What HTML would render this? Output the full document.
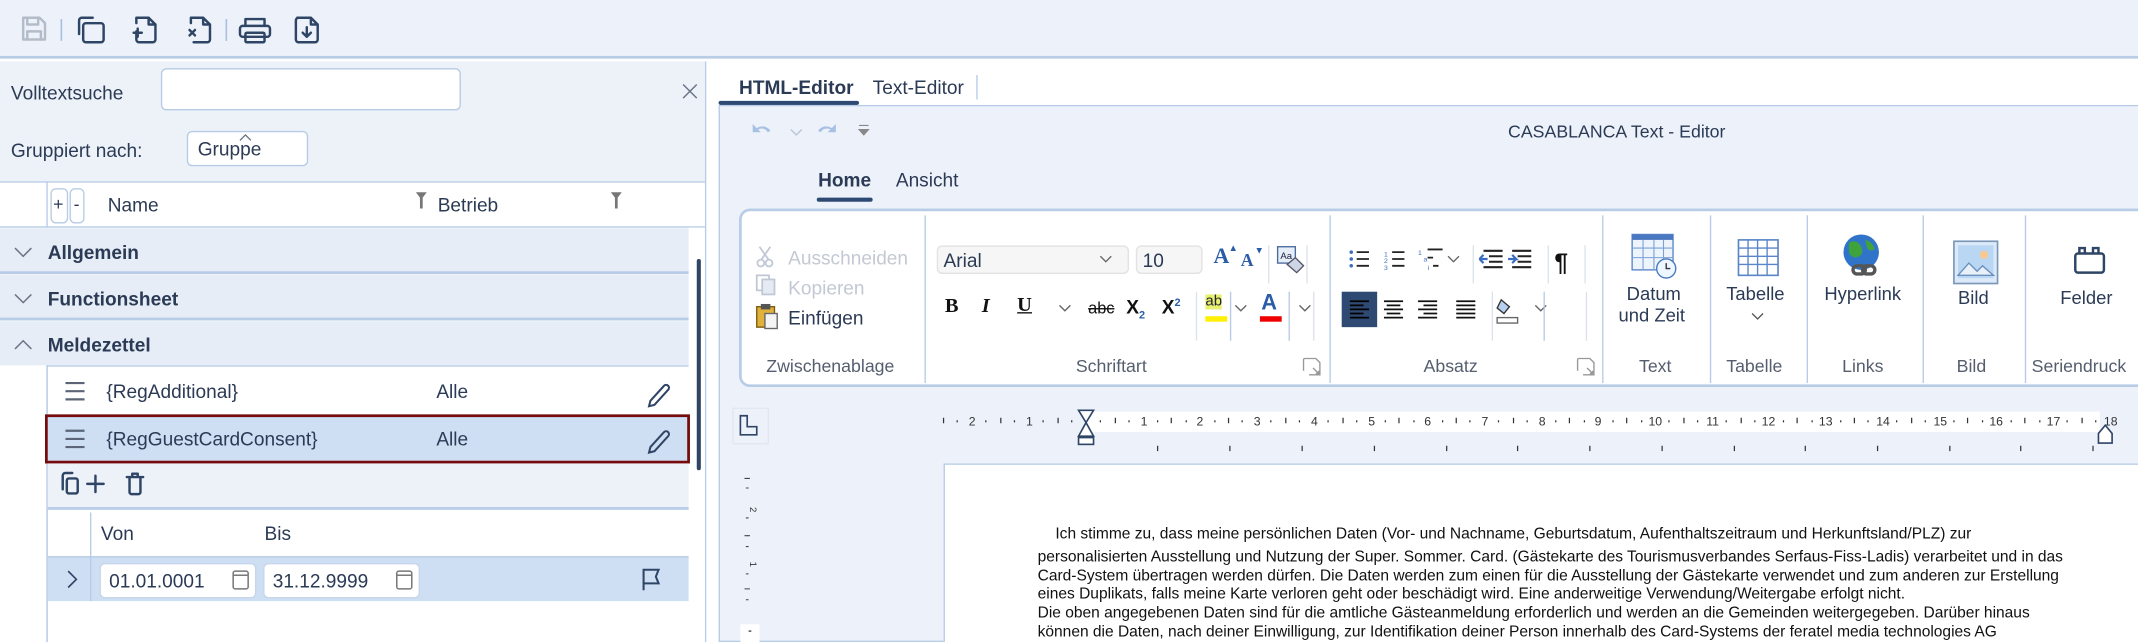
<!DOCTYPE html>
<html><head><meta charset="utf-8">
<style>
*{box-sizing:border-box;margin:0;padding:0}
html,body{width:2138px;height:642px;overflow:hidden;background:#fff}
#s{position:absolute;left:0;top:0;width:1568px;height:471px;transform:scale(1.36352,1.3631);transform-origin:0 0;font-family:"Liberation Sans",sans-serif;color:#2b3a55;font-size:14px;overflow:hidden;background:#fff}
.a{position:absolute}
.t{position:absolute;white-space:nowrap;line-height:1}
svg{position:absolute;overflow:visible}
.ic{fill:none;stroke:#2e4566;stroke-width:1.8;stroke-linecap:round;stroke-linejoin:round}
.b{font-weight:bold}
.lbl{color:#555e6e;font-size:13px}
.doc{position:absolute;left:761px;font-size:11.4px;color:#111;white-space:nowrap;line-height:1}
.sep{position:absolute;width:1px;background:#b8cbe6}
.gs{position:absolute;width:1px;background:#dde3ec}
.rn{font-size:9px;fill:#333;text-anchor:middle;font-family:"Liberation Sans",sans-serif}
</style></head><body><div id="s">
<div class="a" style="left:0;top:0;width:1568px;height:43px;background:#edf2fa;border-bottom:2px solid #b8cce6"></div>
<svg style="left:0;top:0" width="260" height="43">
<g class="ic" style="stroke:#b3bcc8"><path d="M17 13h12l4 4v12H17z"/><path d="M20 13v5h8v-5M20 29v-6h10v6"/></g>
<line x1="45" y1="14" x2="45" y2="30" stroke="#a9c0e0" stroke-width="1.2"/>
<g class="ic"><path d="M58 25V15a2 2 0 0 1 2-2h8"/><rect x="61" y="17" width="15" height="14" rx="2"/>
<path d="M100 13h9l5 5v11a2 2 0 0 1-2 2h-10a2 2 0 0 1-2-2v-6M100 17v-4M98 24h6M101 21v6"/><path d="M109 13v5h5"/>
<path d="M140 13h9l5 5v11a2 2 0 0 1-2 2h-10M140 17v-4M149 13v5h5"/><path d="M139 22l4 4M143 22l-4 4"/></g>
<line x1="166" y1="14" x2="166" y2="30" stroke="#a9c0e0" stroke-width="1.2"/>
<g class="ic"><path d="M180 19v-5h14v5"/><rect x="176" y="19" width="22" height="8" rx="2"/><rect x="180" y="24" width="14" height="7" rx="1"/>
<path d="M218 13h10l5 5v11a2 2 0 0 1-2 2h-12a2 2 0 0 1-2-2V15a2 2 0 0 1 2-2zM228 13v5h5M225 20v7M222 24l3 3 3-3"/></g>
</svg>
<div class="a" style="left:0;top:45px;width:517px;height:426px;background:#edf2f9"></div>
<div class="t" style="left:8px;top:61px">Volltextsuche</div>
<div class="a" style="left:118px;top:50px;width:220px;height:31px;background:#fff;border:1px solid #b7cbe6;border-radius:4px"></div>
<svg style="left:500px;top:61px" width="12" height="12"><path d="M1 1l10 10M11 1L1 11" stroke="#6b7585" stroke-width="1.1"/></svg>
<div class="t" style="left:8px;top:103px">Gruppiert nach:</div>
<div class="a" style="left:137px;top:96px;width:89px;height:26px;background:#fff;border:1px solid #b7cbe6;border-radius:4px"></div>
<div class="t" style="left:145px;top:102px">Gruppe</div>
<svg style="left:175px;top:98px" width="10" height="6"><path d="M1 5l4-4 4 4" fill="none" stroke="#6b7585" stroke-width="1"/></svg>
<div class="a" style="left:0;top:133px;width:517px;height:34px;background:#fff;border-top:1px solid #b8cce6;border-bottom:1px solid #b8cce6"></div>
<div class="a" style="left:34px;top:133px;width:1px;height:34px;background:#b8cce6"></div>
<div class="a" style="left:37px;top:138px;width:13px;height:26px;border:1px solid #b8cce6;border-radius:4px"></div>
<div class="t" style="left:39px;top:143px;font-size:13px">+</div>
<div class="a" style="left:51px;top:138px;width:11px;height:26px;border:1px solid #b8cce6;border-radius:4px"></div>
<div class="t" style="left:54px;top:143px;font-size:13px">-</div>
<div class="t" style="left:79px;top:143px">Name</div>
<svg style="left:304px;top:140px" width="10" height="14"><path d="M1 1h8l-3 4v8h-2V5z" fill="#777"/></svg>
<div class="t" style="left:321px;top:143px">Betrieb</div>
<svg style="left:447px;top:140px" width="10" height="14"><path d="M1 1h8l-3 4v8h-2V5z" fill="#777"/></svg>
<div class="a" style="left:505px;top:167px;width:12px;height:304px;background:#fff"></div>
<div class="a" style="left:0;top:168px;width:505px;height:33px;background:#e6edf6;border-bottom:2px solid #b8cce6"></div>
<div class="a" style="left:0;top:202px;width:505px;height:33px;background:#e6edf6;border-bottom:2px solid #b8cce6"></div>
<div class="a" style="left:0;top:236px;width:505px;height:32px;background:#e6edf6"></div>
<svg style="left:10px;top:180px" width="14" height="10"><path d="M1 2l6 6 6-6" fill="none" stroke="#6b7585" stroke-width="1.1"/></svg>
<svg style="left:10px;top:214px" width="14" height="10"><path d="M1 2l6 6 6-6" fill="none" stroke="#6b7585" stroke-width="1.1"/></svg>
<svg style="left:10px;top:248px" width="14" height="10"><path d="M1 8l6-6 6 6" fill="none" stroke="#6b7585" stroke-width="1.1"/></svg>
<div class="t b" style="left:35px;top:178px">Allgemein</div>
<div class="t b" style="left:35px;top:212px">Functionsheet</div>
<div class="t b" style="left:35px;top:246px">Meldezettel</div>
<div class="a" style="left:34px;top:268px;width:471px;height:203px;background:#fff;border-left:1px solid #b8cce6;border-top:1px solid #b8cce6"></div>
<div class="a" style="left:0;top:268px;width:34px;height:203px;background:#fff"></div>
<div class="a" style="left:34px;top:268px;width:1px;height:203px;background:#b8cce6"></div>
<div class="a" style="left:33px;top:304px;width:473px;height:36px;background:#cfdff3;border:2.5px solid #750b0b"></div>
<svg style="left:46px;top:278px" width="450" height="60"><g stroke="#5b6577" stroke-width="1.6"><path d="M2 3h14M2 9h14M2 15h14M2 38h14M2 44h14M2 50h14"/></g>
<g fill="none" stroke="#2e4566" stroke-width="1.5"><path d="M431 16l10-11a2 2 0 0 1 3 3L434 19l-4 1z"/><path d="M431 50l10-11a2 2 0 0 1 3 3L434 53l-4 1z"/></g></svg>
<div class="t" style="left:78px;top:280px">{RegAdditional}</div>
<div class="t" style="left:320px;top:280px">Alle</div>
<div class="t" style="left:78px;top:315px">{RegGuestCardConsent}</div>
<div class="t" style="left:320px;top:315px">Alle</div>
<div class="a" style="left:35px;top:340px;width:470px;height:34px;background:#edf2f9;border-bottom:2px solid #b8cce6"></div>
<svg style="left:44px;top:345px" width="70" height="20"><g class="ic" stroke-width="1.5"><path d="M2 14V4a2 2 0 0 1 2-2h5"/><rect x="5" y="6" width="8" height="11" rx="1.5"/><path d="M26 4v12M20 10h12M51 5v11a1.5 1.5 0 0 0 1.5 1.5h5A1.5 1.5 0 0 0 59 16V5M49 5h12M53 5V2.5h4V5"/></g></svg>
<div class="a" style="left:66px;top:376px;width:1px;height:64px;background:#b8cce6"></div>
<div class="t" style="left:74px;top:384px">Von</div>
<div class="t" style="left:194px;top:384px">Bis</div>
<div class="a" style="left:35px;top:408px;width:470px;height:33px;background:#cfdff3;border-top:1px solid #b8cce6"></div>
<div class="a" style="left:66px;top:408px;width:1px;height:33px;background:#b8cce6"></div>
<svg style="left:48px;top:418px" width="10" height="14"><path d="M2 1l6 6-6 6" fill="none" stroke="#2e4566" stroke-width="1.2"/></svg>
<div class="a" style="left:73px;top:413px;width:115px;height:26px;background:#fff;border:1px solid #c7d6ea;border-radius:4px"></div>
<div class="a" style="left:193px;top:413px;width:115px;height:26px;background:#fff;border:1px solid #c7d6ea;border-radius:4px"></div>
<div class="t" style="left:80px;top:419px">01.01.0001</div>
<div class="t" style="left:200px;top:419px">31.12.9999</div>
<svg style="left:170px;top:418px" width="140" height="16"><g fill="none" stroke="#777" stroke-width="1.1"><rect x="1" y="1" width="11" height="13" rx="1.5"/><path d="M1 4h11"/><rect x="121" y="1" width="11" height="13" rx="1.5"/><path d="M121 4h11"/></g></svg>
<svg style="left:470px;top:416px" width="16" height="18"><path d="M2 17V2h11l-2 5 2 5H2" fill="none" stroke="#2e4566" stroke-width="1.5"/></svg>
<div class="a" style="left:511px;top:190px;width:3px;height:155px;background:#2e4566;border-radius:2px"></div>
<div class="a" style="left:517px;top:45px;width:4px;height:426px;background:#fff;border-left:1px solid #b8cce6"></div>
<div class="t b" style="left:542px;top:57px;color:#2b3a55">HTML-Editor</div>
<div class="a" style="left:527px;top:74px;width:103px;height:3px;background:#2e4a73;border-radius:2px"></div>
<div class="t" style="left:640px;top:57px">Text-Editor</div>
<div class="a" style="left:716px;top:55px;width:1px;height:18px;background:#b8cce6"></div>
<div class="a" style="left:527px;top:77px;width:1045px;height:394px;background:#edf2fa;border:1px solid #b8cce6"></div>
<svg style="left:549px;top:88px" width="100" height="18"><g fill="#a8c0e2"><path d="M3 3v6h6l-2-2a5 5 0 0 1 7 2l2-1a7 7 0 0 0-10-2z"/><path d="M38 3v6h-6l2-2a5 5 0 0 0-7 2l-2-1a7 7 0 0 1 10-2z" transform="translate(26,0)"/></g>
<path d="M31 7l4 4 4-4" fill="none" stroke="#b8c4d4" stroke-width="1"/><path d="M81 4h7M81 7h7l-3.5 4z" fill="#888" stroke="#888" stroke-width="0.8"/></svg>
<div class="t" style="left:1106px;top:90px;font-size:13px">CASABLANCA Text - Editor</div>
<div class="t b" style="left:600px;top:125px">Home</div>
<div class="a" style="left:599px;top:145px;width:41px;height:3px;background:#2e4a73;border-radius:2px"></div>
<div class="t" style="left:657px;top:125px">Ansicht</div>
<div class="a" style="left:542px;top:153px;width:1040px;height:131px;background:#fff;border:2px solid #b8cce6;border-right:none;border-radius:8px 0 0 8px"></div>
<div class="sep" style="left:678px;top:158px;height:123px"></div>
<div class="sep" style="left:975px;top:158px;height:123px"></div>
<div class="sep" style="left:1175px;top:158px;height:123px"></div>
<div class="sep" style="left:1254px;top:158px;height:123px"></div>
<div class="sep" style="left:1325px;top:158px;height:123px"></div>
<div class="sep" style="left:1410px;top:158px;height:123px"></div>
<div class="sep" style="left:1485px;top:158px;height:123px"></div>
<div class="t lbl" style="left:562px;top:262px">Zwischenablage</div>
<div class="t lbl" style="left:789px;top:262px">Schriftart</div>
<div class="t lbl" style="left:1044px;top:262px">Absatz</div>
<div class="t lbl" style="left:1202px;top:262px">Text</div>
<div class="t lbl" style="left:1266px;top:262px">Tabelle</div>
<div class="t lbl" style="left:1351px;top:262px">Links</div>
<div class="t lbl" style="left:1435px;top:262px">Bild</div>
<div class="t lbl" style="left:1490px;top:262px">Seriendruck</div>
<svg style="left:955px;top:262px" width="220" height="16"><g fill="none" stroke="#999" stroke-width="1"><path d="M1 10V2a1 1 0 0 1 1-1h8l3 3v9H5M8 8l4 4M10 12h2v-2"/><path d="M202 10V2a1 1 0 0 1 1-1h8l3 3v9h-8M209 8l4 4M211 12h2v-2"/></g></svg>
<svg style="left:553px;top:180px" width="22" height="62"><g fill="none" stroke="#c0c8d6" stroke-width="1.3"><path d="M4 1l7 10M12 1L5 11"/><circle cx="5" cy="13" r="2.5"/><circle cx="11" cy="13" r="2.5"/><rect x="2" y="22" width="9" height="11"/><rect x="6" y="25" width="9" height="11" fill="#e6ebf3"/></g>
<rect x="2" y="45" width="13" height="15" fill="#e0b23b" stroke="#7a5a10" stroke-width="1"/><rect x="5" y="43" width="7" height="4" fill="#555"/><rect x="8" y="50" width="9" height="11" fill="#f4f4f4" stroke="#666" stroke-width="1"/></svg>
<div class="t" style="left:578px;top:182px;color:#c3c9d3">Ausschneiden</div>
<div class="t" style="left:578px;top:204px;color:#c3c9d3">Kopieren</div>
<div class="t" style="left:578px;top:226px">Einfügen</div>
<div class="a" style="left:687px;top:180px;width:141px;height:21px;background:#f6f6f6;border:1px solid #e2e2e2;border-radius:4px"></div>
<div class="t" style="left:692px;top:184px">Arial</div>
<svg style="left:806px;top:186px" width="60" height="10"><path d="M1 2l4 4 4-4M52 2l4 4 4-4" fill="none" stroke="#666" stroke-width="1"/></svg>
<div class="a" style="left:833px;top:180px;width:49px;height:21px;background:#f6f6f6;border:1px solid #e2e2e2;border-radius:4px"></div>
<div class="t" style="left:838px;top:184px">10</div>
<div class="t b" style="left:890px;top:181px;font-family:'Liberation Serif',serif;font-size:16px;color:#2a5ca8">A</div>
<div class="t b" style="left:910px;top:184px;font-family:'Liberation Serif',serif;font-size:13px;color:#2a5ca8">A</div>
<div class="t" style="left:901px;top:179px;font-size:7px;color:#2a5ca8">▲</div>
<div class="t" style="left:920px;top:181px;font-size:7px;color:#2a5ca8">▼</div>
<div class="gs" style="left:930px;top:180px;height:28px"></div>
<svg style="left:936px;top:180px" width="22" height="22"><rect x="1" y="1" width="13" height="12" fill="#e6eef8" stroke="#4b6aa0"/><text x="3" y="10" font-size="7" fill="#224">Aa</text><path d="M8 14l6-5 6 6-5 5z" fill="#cdd6e6" stroke="#556" stroke-width="1"/></svg>
<div class="gs" style="left:958px;top:180px;height:28px"></div>
<div class="t b" style="left:693px;top:218px;font-family:'Liberation Serif',serif;font-size:15px;color:#111">B</div>
<div class="t b" style="left:720px;top:218px;font-family:'Liberation Serif',serif;font-size:15px;font-style:italic;color:#111">I</div>
<div class="t b" style="left:746px;top:217px;font-family:'Liberation Serif',serif;font-size:15px;text-decoration:underline;color:#111">U</div>
<svg style="left:776px;top:222px" width="10" height="8"><path d="M1 2l4 4 4-4" fill="none" stroke="#666" stroke-width="1"/></svg>
<div class="t" style="left:798px;top:220px;font-size:12px;text-decoration:line-through;color:#111">abc</div>
<div class="t b" style="left:826px;top:218px;font-size:14px;color:#111">X<sub style="font-size:8px;color:#2a5ca8">2</sub></div>
<div class="t b" style="left:852px;top:218px;font-size:14px;color:#111">X<sup style="font-size:8px;color:#2a5ca8">2</sup></div>
<div class="gs" style="left:877px;top:214px;height:36px"></div>
<div class="a" style="left:884px;top:232px;width:16px;height:4px;background:#ffef00"></div>
<div class="t" style="left:884px;top:216px;font-size:11px;color:#223;background:#e8f070">ab</div>
<div class="sep" style="left:902px;top:214px;height:36px"></div>
<svg style="left:905px;top:222px" width="60" height="8"><path d="M1 2l4 4 4-4M48 2l4 4 4-4" fill="none" stroke="#666" stroke-width="1"/></svg>
<div class="t b" style="left:925px;top:215px;font-size:16px;color:#2a5ca8">A</div>
<div class="a" style="left:924px;top:232px;width:16px;height:4px;background:#e00"></div>
<div class="sep" style="left:945px;top:214px;height:36px"></div>
<div class="gs" style="left:963px;top:214px;height:36px"></div>
<svg style="left:985px;top:180px" width="175" height="65">
<g fill="#3a6cc0"><circle cx="6" cy="5" r="1.3"/><circle cx="6" cy="10" r="1.3"/><circle cx="6" cy="15" r="1.3"/></g>
<g stroke="#222" stroke-width="1.3"><path d="M10 5h9M10 10h9M10 15h9M36 5h9M36 10h9M36 15h9M62 3h11M62 9h4M66 15h4"/></g>
<text x="30" y="8" font-size="5" fill="#3a6cc0">1</text><text x="30" y="13" font-size="5" fill="#3a6cc0">2</text><text x="30" y="18" font-size="5" fill="#3a6cc0">3</text>
<text x="55" y="7" font-size="5" fill="#3a6cc0">1</text><text x="59" y="12" font-size="5" fill="#3a6cc0">a</text><text x="62" y="18" font-size="5" fill="#3a6cc0">i</text>
<path d="M77 8l4 4 4-4" fill="none" stroke="#666" stroke-width="1"/>
<g stroke="#222" stroke-width="1.5"><path d="M103 4h14M107 8h10M107 12h10M103 16h14M124 4h14M128 8h10M128 12h10M124 16h14"/></g>
<path d="M100 10h6M100 10l3-3M100 10l3 3M121 10h6l-3-3M127 10l-3 3" stroke="#3a6cc0" stroke-width="1.6" fill="none"/>
<text x="155" y="19" font-size="18" font-weight="bold" fill="#111" font-family="Liberation Sans">¶</text>
</svg>
<div class="gs" style="left:1080px;top:180px;height:28px"></div>
<div class="gs" style="left:1135px;top:180px;height:28px"></div>
<div class="gs" style="left:1162px;top:180px;height:28px"></div>
<div class="a" style="left:984px;top:214px;width:26px;height:26px;background:#2e4a73"></div>
<svg style="left:984px;top:214px" width="150" height="26"><g stroke="#111" stroke-width="1.3"><path d="M6 7h14M6 10h10M6 13h14M6 16h10M6 19h14" stroke="#000"/><path d="M31 7h14M33 10h10M31 13h14M33 16h10M31 19h14M56 7h14M60 10h10M56 13h14M60 16h10M56 19h14M84 7h14M84 10h14M84 13h14M84 16h14M84 19h14"/></g>
<path d="M117 6l6 5-4 5-5-4z" fill="#b8d0f0" stroke="#333" stroke-width="1"/><rect x="114" y="19" width="15" height="4" fill="#fff" stroke="#666"/>
<path d="M142 10l4 4 4-4" fill="none" stroke="#666" stroke-width="1"/></svg>
<div class="gs" style="left:1094px;top:214px;height:36px"></div>
<div class="sep" style="left:1132px;top:214px;height:36px"></div>
<div class="gs" style="left:1163px;top:214px;height:36px"></div>
<svg style="left:1196px;top:170px" width="40" height="36"><rect x="1" y="2" width="30" height="26" fill="#eef4fc" stroke="#5a85c8"/><rect x="1" y="2" width="30" height="4" fill="#4a78c0"/><g stroke="#7aa0d8" stroke-width="0.8"><path d="M1 12h30M1 19h30M9 6v22M17 6v22M24 6v22"/></g><circle cx="26" cy="27" r="7" fill="#eef6ff" stroke="#4a78c0"/><path d="M26 23v4h3" stroke="#333" fill="none"/></svg>
<div class="t" style="left:1193px;top:209px;font-size:13.5px">Datum</div>
<div class="t" style="left:1187px;top:225px;font-size:13.5px">und Zeit</div>
<svg style="left:1274px;top:175px" width="32" height="28"><rect x="1" y="1" width="29" height="26" fill="#fff" stroke="#5a85c8" stroke-width="1.2"/><g stroke="#5a85c8" stroke-width="1"><path d="M1 7h29M1 13h29M1 19h29M8 1v26M15 1v26M22 1v26"/></g></svg>
<div class="t" style="left:1266px;top:209px;font-size:13.5px">Tabelle</div>
<svg style="left:1284px;top:228px" width="10" height="8"><path d="M1 2l4 4 4-4" fill="none" stroke="#555" stroke-width="1"/></svg>
<svg style="left:1349px;top:170px" width="36" height="34"><circle cx="16" cy="15" r="13" fill="#2f74c9"/><path d="M7 8q6-3 9 3t-4 8q-5-1-5-5zM19 6q5 1 7 7-5 2-6-2z" fill="#3ea33a"/><g fill="none" stroke="#555" stroke-width="2.5"><rect x="10" y="25" width="9" height="6" rx="3"/><rect x="17" y="25" width="9" height="6" rx="3"/></g></svg>
<div class="t" style="left:1338px;top:209px;font-size:13.5px">Hyperlink</div>
<svg style="left:1432px;top:176px" width="36" height="34"><rect x="1" y="1" width="32" height="31" fill="#dbe9f8" stroke="#7a96b8" stroke-width="1.2"/><rect x="4" y="4" width="26" height="24" fill="#b9d6f3"/><circle cx="23" cy="11" r="3" fill="#f8c890"/><path d="M4 26l8-9 6 6 4-4 8 7z" fill="#e8f0fa" stroke="#6b8fbf"/></svg>
<div class="t" style="left:1436px;top:212px;font-size:13.5px">Bild</div>
<svg style="left:1520px;top:180px" width="28" height="24"><g fill="none" stroke="#2e4566" stroke-width="1.8"><rect x="2" y="6" width="21" height="14" rx="2"/><path d="M5 6V2h4v4M15 6V2h4v4"/></g></svg>
<div class="t" style="left:1511px;top:212px;font-size:13.5px">Felder</div>
<div class="a" style="left:537px;top:299px;width:27px;height:27px;border:1px solid #e0e7f2"></div>
<svg style="left:541px;top:304px" width="20" height="18"><path d="M2 1v14h12v-6H7V1z" fill="none" stroke="#2e4566" stroke-width="1.2"/></svg>
<div class="a" style="left:797px;top:302px;width:743px;height:15px;background:#fff"></div>
<svg style="left:0;top:0" width="1568" height="471">
<g class="rn">
<text x="713" y="312">2</text><text x="755" y="312">1</text>
<text x="839" y="312">1</text><text x="880" y="312">2</text><text x="922" y="312">3</text><text x="964" y="312">4</text><text x="1006" y="312">5</text><text x="1047" y="312">6</text><text x="1089" y="312">7</text><text x="1131" y="312">8</text><text x="1172" y="312">9</text><text x="1214" y="312">10</text><text x="1256" y="312">11</text><text x="1297" y="312">12</text><text x="1339" y="312">13</text><text x="1381" y="312">14</text><text x="1423" y="312">15</text><text x="1464" y="312">16</text><text x="1506" y="312">17</text><text x="1548" y="312">18</text>
</g>
<g stroke="#333" stroke-width="0.9">
<path d="M692 306.5v4M734 306.5v4M776 306.5v4M818 306.5v4M859 306.5v4M901 306.5v4M943 306.5v4M985 306.5v4M1026 306.5v4M1068 306.5v4M1110 306.5v4M1151 306.5v4M1193 306.5v4M1235 306.5v4M1277 306.5v4M1318 306.5v4M1360 306.5v4M1402 306.5v4M1443 306.5v4M1485 306.5v4M1527 306.5v4"/>
<path d="M702 308.3v1.6M723 308.3v1.6M744 308.3v1.6M765 308.3v1.6M786 308.3v1.6M807 308.3v1.6M828 308.3v1.6M849 308.3v1.6M870 308.3v1.6M891 308.3v1.6M911 308.3v1.6M932 308.3v1.6M953 308.3v1.6M974 308.3v1.6M995 308.3v1.6M1016 308.3v1.6M1037 308.3v1.6M1058 308.3v1.6M1078 308.3v1.6M1099 308.3v1.6M1120 308.3v1.6M1141 308.3v1.6M1162 308.3v1.6M1183 308.3v1.6M1204 308.3v1.6M1224 308.3v1.6M1245 308.3v1.6M1266 308.3v1.6M1287 308.3v1.6M1308 308.3v1.6M1329 308.3v1.6M1350 308.3v1.6M1370 308.3v1.6M1391 308.3v1.6M1412 308.3v1.6M1433 308.3v1.6M1454 308.3v1.6M1475 308.3v1.6M1496 308.3v1.6M1516 308.3v1.6M1537 308.3v1.6"/>
<path d="M849 327v4M902 327v4M955 327v4M1008 327v4M1061 327v4M1113 327v4M1166 327v4M1219 327v4M1272 327v4M1324 327v4M1377 327v4M1430 327v4M1482 327v4M1535 327v4"/>
</g>
</svg>
<svg style="left:790px;top:300px" width="14" height="28"><path d="M1 1h11L6.5 10zM6.5 10L1 20h11z" fill="#fff" stroke="#2e4566" stroke-width="1.2"/><rect x="1" y="21" width="11" height="5" fill="#fff" stroke="#2e4566" stroke-width="1.2"/></svg>
<svg style="left:1538px;top:310px" width="12" height="16"><path d="M1 15V8l5-6 5 6v7z" fill="#fff" stroke="#2e4566" stroke-width="1.2"/></svg>
<svg style="left:543px;top:350px" width="14" height="121"><g stroke="#444" stroke-width="0.8"><path d="M3 1h4M4 8h2M3 43h4M4 51h2M3 82h4M4 90h2M4 71h2M4 30h2"/></g><text x="7" y="22" font-size="7" fill="#333" transform="rotate(90 7 22)">2</text><text x="7" y="62" font-size="7" fill="#333" transform="rotate(90 7 62)">1</text><rect x="0" y="108" width="14" height="13" fill="#fff"/><path d="M6 113h2" stroke="#444"/></svg>
<div class="a" style="left:692px;top:340px;width:880px;height:135px;background:#fff;border-left:1px solid #b8cce6;border-top:1px solid #b8cce6"></div>
<div class="doc" style="left:774px;top:387px">Ich stimme zu, dass meine persönlichen Daten (Vor- und Nachname, Geburtsdatum, Aufenthaltszeitraum und Herkunftsland/PLZ) zur</div>
<div class="doc" style="top:404px">personalisierten Ausstellung und Nutzung der Super. Sommer. Card. (Gästekarte des Tourismusverbandes Serfaus-Fiss-Ladis) verarbeitet und in das</div>
<div class="doc" style="top:418px">Card-System übertragen werden dürfen. Die Daten werden zum einen für die Ausstellung der Gästekarte verwendet und zum anderen zur Erstellung</div>
<div class="doc" style="top:431px">eines Duplikats, falls meine Karte verloren geht oder beschädigt wird. Eine anderweitige Verwendung/Weitergabe erfolgt nicht.</div>
<div class="doc" style="top:445px">Die oben angegebenen Daten sind für die amtliche Gästeanmeldung erforderlich und werden an die Gemeinden weitergegeben. Darüber hinaus</div>
<div class="doc" style="top:459px">können die Daten, nach deiner Einwilligung, zur Identifikation deiner Person innerhalb des Card-Systems der feratel media technologies AG</div>
</div></body></html>
